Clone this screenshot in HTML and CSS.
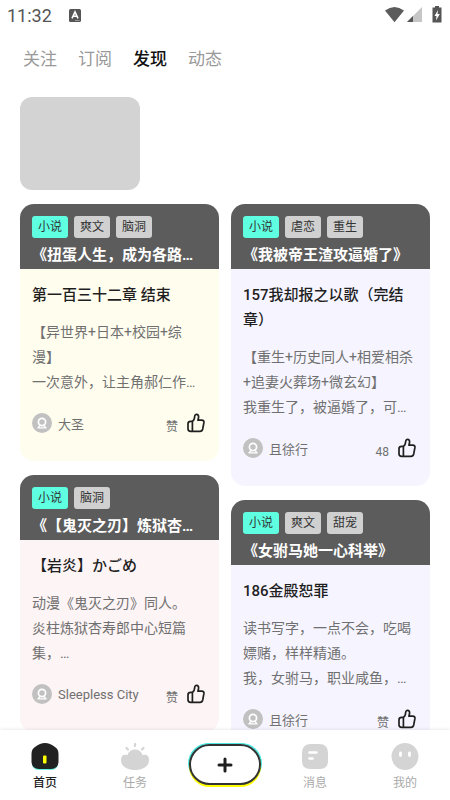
FILE: index.html
```html
<!DOCTYPE html>
<html lang="zh-CN">
<head>
<meta charset="utf-8">
<meta name="viewport" content="width=device-width, initial-scale=1">
<title>发现</title>
<link rel="stylesheet" href="styles.css">
</head>
<body>
<svg class="defs" aria-hidden="true">
  <symbol id="avatar" viewBox="0 0 20 20">
    <circle cx="10" cy="10" r="10" fill="#c1c1c1"/>
    <circle cx="10" cy="9" r="3.6" fill="none" stroke="#fff" stroke-width="1.7"/>
    <path d="M8 12.4 6 14.9h8l-2-2.500" fill="none" stroke="#fff" stroke-width="1.400" stroke-linejoin="round"/>
  </symbol>
  <symbol id="thumb" viewBox="0 0 18 20">
    <path d="M5.400 8.300C7.200 7.500 7.600 5.500 7.700 3.300C7.800 .7 11.600 .8 11.600 3.800C11.600 5 11.300 6 10.900 7.200H14.800Q17.300 7.300 16.900 9.700L15.700 16Q15.200 18.300 13 18.300H3.600Q1 18.300 1 15.800V10.800Q1 8.300 3.600 8.300ZM5.400 8.300V18.300" fill="none" stroke="#1f1f1f" stroke-width="1.700" stroke-linejoin="round"/>
  </symbol>
</svg>

<div class="status">
  <span>11:32</span>
  <svg class="status-app" width="12" height="13" viewBox="0 0 12 13" aria-hidden="true"><rect width="12" height="13" rx="1.500" fill="#555"/><path d="M3 9.300 6 2.800 9 9.300M4.300 7.300H7.700" fill="none" stroke="#fff" stroke-width="1.600"/><path d="M6 11.500H10.500" stroke="#999"/></svg>
  <svg class="status-icons" width="58" height="20" viewBox="0 0 58 20" aria-hidden="true">
    <path d="M0 5.600Q9.500-1.600 19 5.600L9.500 17.200Z" fill="#5b5b5b"/>
    <path d="M37 2V17H22Z" fill="#c6c6c6"/><path d="M28 11V17H22Z" fill="#555"/>
    <path d="M50 1h4v1.500h2.500V17.500h-9V2.500H50Z" fill="#555"/><path d="M53 5 49.500 11H51.500L51 15.500 54.800 9H52.500Z" fill="#fff"/>
  </svg>
</div>

<nav class="tabs" aria-label="频道">
  <a href="#">关注</a>
  <a href="#">订阅</a>
  <a href="#" class="active" aria-current="page">发现</a>
  <a href="#">动态</a>
</nav>

<main class="feed">
  <div class="placeholder"></div>
  <div class="columns">
    <div class="column">
      <article class="card cream">
        <header>
          <div class="tags"><span class="tag main">小说</span><span class="tag">爽文</span><span class="tag">脑洞</span></div>
          <h2>《扭蛋人生，成为各路…</h2>
        </header>
        <div class="body">
          <h3>第一百三十二章 结束</h3>
          <p>【异世界+日本+校园+综漫】<br>一次意外，让主角郝仁作…</p>
          <footer>
            <svg class="avatar" aria-hidden="true"><use href="#avatar"/></svg>
            <span class="author">大圣</span>
            <button class="like" type="button"><span>赞</span><svg aria-hidden="true"><use href="#thumb"/></svg></button>
          </footer>
        </div>
      </article>
      <article class="card pink">
        <header>
          <div class="tags"><span class="tag main">小说</span><span class="tag">脑洞</span></div>
          <h2>《【鬼灭之刃】炼狱杏…</h2>
        </header>
        <div class="body">
          <h3>【岩炎】かごめ</h3>
          <p>动漫《鬼灭之刃》同人。<br>炎柱炼狱杏寿郎中心短篇集，…</p>
          <footer>
            <svg class="avatar" aria-hidden="true"><use href="#avatar"/></svg>
            <span class="author">Sleepless City</span>
            <button class="like" type="button"><span>赞</span><svg aria-hidden="true"><use href="#thumb"/></svg></button>
          </footer>
        </div>
      </article>
    </div>
    <div class="column">
      <article class="card lilac">
        <header>
          <div class="tags"><span class="tag main">小说</span><span class="tag">虐恋</span><span class="tag">重生</span></div>
          <h2>《我被帝王渣攻逼婚了》</h2>
        </header>
        <div class="body">
          <h3>157我却报之以歌（完结章）</h3>
          <p>【重生+历史同人+相爱相杀+追妻火葬场+微玄幻】<br>我重生了，被逼婚了，可…</p>
          <footer>
            <svg class="avatar" aria-hidden="true"><use href="#avatar"/></svg>
            <span class="author">且徐行</span>
            <button class="like" type="button"><span>48</span><svg aria-hidden="true"><use href="#thumb"/></svg></button>
          </footer>
        </div>
      </article>
      <article class="card lilac">
        <header>
          <div class="tags"><span class="tag main">小说</span><span class="tag">爽文</span><span class="tag">甜宠</span></div>
          <h2>《女驸马她一心科举》</h2>
        </header>
        <div class="body">
          <h3>186金殿恕罪</h3>
          <p>读书写字，一点不会，吃喝嫖赌，样样精通。<br>我，女驸马，职业咸鱼，…</p>
          <footer>
            <svg class="avatar" aria-hidden="true"><use href="#avatar"/></svg>
            <span class="author">且徐行</span>
            <button class="like" type="button"><span>赞</span><svg aria-hidden="true"><use href="#thumb"/></svg></button>
          </footer>
        </div>
      </article>
    </div>
  </div>
</main>

<nav class="bottom" aria-label="主导航">
  <a href="#" class="active" aria-current="page">
    <svg viewBox="0 0 30 30" aria-hidden="true"><path d="M2 14Q2 9 5 7Q15-1 25 7Q28 9 28 14V22Q28 29 21 29H9Q2 29 2 22Z" fill="#5ff0de"/><path d="M1.500 13Q1.500 8 5 6Q15-2 25 6Q28.500 8 28.500 13V21Q28 28 21 28H9Q2 28 1.500 21Z" fill="#222"/><rect x="13" y="14.500" width="3.500" height="8" rx="1" fill="#ff0"/></svg>
    <span>首页</span>
  </a>
  <a href="#">
    <svg viewBox="0 0 30 30" aria-hidden="true"><path d="M7.500 14Q9.500 8.500 15 8.500T22.500 14Q29 12.500 29 19C29 26 22 29 15 29S1 26 1 19Q1 12.500 7.500 14Z" fill="#d4d4d4"/><path d="M15 3V5M6.500 7 8 8.500M23.500 7 22 8.500" stroke="#d4d4d4" stroke-width="2.200" stroke-linecap="round"/></svg>
    <span>任务</span>
  </a>
  <button class="create" type="button" aria-label="发布">
    <svg viewBox="0 0 16 16" aria-hidden="true"><path d="M8 2V14M2 8H14" stroke="#1f1f1f" stroke-width="3" stroke-linecap="round"/></svg>
  </button>
  <a href="#">
    <svg viewBox="0 0 30 30" aria-hidden="true"><path d="M2 12Q2 3 11 3H19Q28 3 28 12V20Q28 28 20 28H10Q2 28 2 20Z" fill="#d4d4d4"/><path d="M9.500 11.500H16.500M9.500 17.500H12.500" stroke="#fff" stroke-width="2.600" stroke-linecap="round"/></svg>
    <span>消息</span>
  </a>
  <a href="#">
    <svg viewBox="0 0 30 30" aria-hidden="true"><circle cx="15" cy="15.500" r="13.500" fill="#d4d4d4"/><path d="M10.500 12V14.500M19.500 12V14.500" stroke="#fff" stroke-width="2.800" stroke-linecap="round"/></svg>
    <span>我的</span>
  </a>
</nav>
</body>
</html>
```
FILE: styles.css
```css
* {
  box-sizing: border-box;
}

body {
  margin: 0;
  height: 100vh;
  display: flex;
  flex-direction: column;
  background: #fff;
  color: #1f1f1f;
  font-family: Roboto, "Noto Sans CJK SC", sans-serif;
  text-spacing-trim: space-all;
}

h2,
h3,
p {
  margin: 0;
}

a {
  color: inherit;
  text-decoration: none;
}

button {
  padding: 0;
  border: 0;
  background: none;
  color: inherit;
  font: inherit;
}

.defs {
  display: none;
}

.status {
  display: flex;
  align-items: center;
  height: 30px;
  padding: 0 7px;
  color: #555;
  font-size: 18px;
  flex-shrink: 0;
}

.status-app {
  margin-left: 17px;
}

.status-icons {
  margin-left: auto;
}

.tabs {
  display: flex;
  align-items: center;
  gap: 21px;
  height: 55px;
  padding: 0 23px;
  color: #999;
  font-size: 17px;
  flex-shrink: 0;
}

.tabs .active {
  color: #111;
  font-weight: 500;
}

.feed {
  flex: 1;
  min-height: 0;
  overflow: hidden;
  padding: 12px 20px 0;
}

.placeholder {
  width: 120px;
  height: 93px;
  margin-bottom: 14px;
  border-radius: 12px;
  background: #d3d3d3;
}

.columns {
  display: grid;
  grid-template-columns: 1fr 1fr;
  gap: 12px;
}

.column {
  display: flex;
  flex-direction: column;
  gap: 14px;
}

.card {
  border-radius: 14px;
  overflow: hidden;
}

.cream {
  background: #fffdee;
}

.pink {
  background: #fdf4f5;
}

.lilac {
  background: #f6f5ff;
}

.card header {
  height: 65px;
  padding: 12px 12px 0;
  background: #5c5c5c;
}

.tags {
  display: flex;
  gap: 6px;
}

.tag {
  padding: 1px 6px 0;
  border-radius: 3px;
  background: #d0d0d0;
  color: #333;
  font-size: 12px;
  line-height: 21px;
}

.tag.main {
  background: #5fffe1;
}

.card h2 {
  margin-top: 5px;
  color: #fff;
  font-size: 15px;
  font-weight: 700;
  line-height: 25px;
  white-space: nowrap;
}

.body {
  padding: 14px 12px 28px;
}

.body h3 {
  font-size: 15px;
  font-weight: 500;
  line-height: 25px;
}

.body p {
  margin-top: 12px;
  color: #707070;
  font-size: 14px;
  line-height: 25px;
}

.card footer {
  display: flex;
  align-items: center;
  height: 20px;
  margin-top: 18px;
  color: #707070;
  font-size: 12px;
}

.avatar {
  width: 20px;
  height: 20px;
}

.author {
  margin-left: 6px;
  font-size: 13px;
}

.like {
  display: flex;
  align-items: flex-end;
  gap: 9px;
  margin-left: auto;
  margin-right: 2px;
  line-height: 12px;
}

.like svg {
  width: 18px;
  height: 20px;
}

.bottom {
  display: grid;
  grid-template-columns: repeat(5, 1fr);
  height: 70px;
  flex-shrink: 0;
  background: #fff;
  box-shadow: 0 -1px 3px rgba(0, 0, 0, 0.08);
  color: #aaa;
  font-size: 12px;
  position: relative;
}

.bottom a {
  display: flex;
  flex-direction: column;
  align-items: center;
  gap: 4px;
  padding-top: 11px;
  line-height: 16px;
}

.bottom a svg {
  width: 30px;
  height: 30px;
}

.bottom .active {
  color: #1f1f1f;
  font-weight: 500;
}

.create {
  display: flex;
  align-items: center;
  justify-content: center;
  justify-self: center;
  width: 72px;
  height: 41px;
  margin-top: 14px;
  border: 2px solid #333;
  border-radius: 21px;
  background: #fff;
  box-shadow: 0 2px 0 #ff0, 1px -1px 0 #4fe8e0, -1px -1px 0 #4fe8e0;
}

.create svg {
  width: 16px;
  height: 16px;
}
```
